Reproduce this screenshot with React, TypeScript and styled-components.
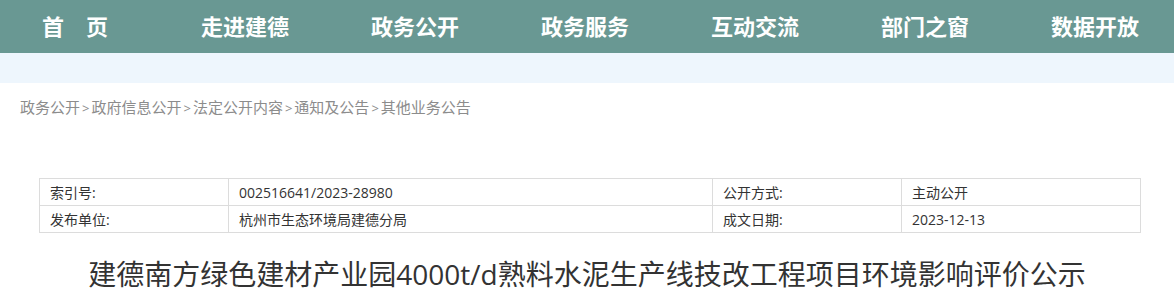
import styled, { createGlobalStyle } from "styled-components";

const GlobalStyle = createGlobalStyle`
  html, body {
    margin: 0;
    padding: 0;
    background: #fff;
  }
  body {
    font-family: "Open Sans", "Noto Sans CJK SC", sans-serif;
    color: #333;
  }
`;

const NAV_ITEMS = ["首\u3000页", "走进建德", "政务公开", "政务服务", "互动交流", "部门之窗", "数据开放"];
const CRUMBS = ["政务公开", "政府信息公开", "法定公开内容", "通知及公告", "其他业务公告"];

const Page = styled.div`
  width: 1174px;
  overflow: hidden;
`;

const NavBar = styled.nav`
  height: 53px;
  background: #699893;
`;

const NavList = styled.ul`
  display: flex;
  margin: 0 0 0 -10px;
  padding: 0;
  list-style: none;
`;

const NavItem = styled.li`
  flex: 0 0 170px;
  text-align: center;
  line-height: 51px;
  font-family: "Noto Sans CJK SC", sans-serif;
  font-size: 22px;
  font-weight: 700;
  color: #fff;
  white-space: nowrap;
`;

const Band = styled.div`
  height: 30px;
  background: #eef6fd;
`;

const Crumbs = styled.div`
  display: flex;
  align-items: center;
  height: 46px;
  padding-left: 20px;
  font-size: 15px;
  color: #8c8c8c;
`;

const Sep = styled.span`
  padding: 0 2px;
  font-size: 13px;
`;

const InfoTable = styled.table`
  margin: 49px 0 0 39px;
  border-collapse: collapse;
  font-size: 14px;
  color: #333;
`;

const Cell = styled.td<{ $w: number }>`
  width: ${({ $w }) => $w - 21}px;
  height: 26px;
  padding: 0 10px;
  border: 1px solid #dcdcdc;
  vertical-align: middle;
  white-space: nowrap;
`;

const Title = styled.h1`
  margin: 21px 0 0;
  line-height: 40px;
  font-size: 28px;
  font-weight: 400;
  text-align: center;
  color: #333;
  white-space: nowrap;
`;

export default function App() {
  return (
    <Page>
      <GlobalStyle />
      <NavBar>
        <NavList>
          {NAV_ITEMS.map((t) => (
            <NavItem key={t}>{t}</NavItem>
          ))}
        </NavList>
      </NavBar>
      <Band />
      <Crumbs>
        {CRUMBS.map((c, i) => (
          <span key={c}>
            {i > 0 && <Sep>&gt;</Sep>}
            {c}
          </span>
        ))}
      </Crumbs>
      <InfoTable>
        <tbody>
          <tr>
            <Cell $w={189}>索引号:</Cell>
            <Cell $w={484}>002516641/2023-28980</Cell>
            <Cell $w={189}>公开方式:</Cell>
            <Cell $w={239}>主动公开</Cell>
          </tr>
          <tr>
            <Cell $w={189}>发布单位:</Cell>
            <Cell $w={484}>杭州市生态环境局建德分局</Cell>
            <Cell $w={189}>成文日期:</Cell>
            <Cell $w={239}>2023-12-13</Cell>
          </tr>
        </tbody>
      </InfoTable>
      <Title>建德南方绿色建材产业园4000t/d熟料水泥生产线技改工程项目环境影响评价公示</Title>
    </Page>
  );
}
